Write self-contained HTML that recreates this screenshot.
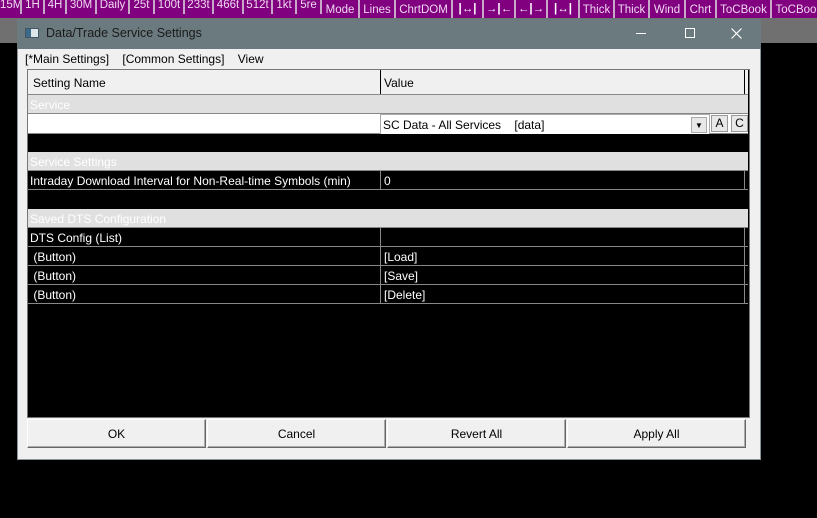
<!DOCTYPE html>
<html><head><style>
*{margin:0;padding:0;box-sizing:border-box}
body{width:817px;height:518px;background:#000;position:relative;overflow:hidden;font-family:"Liberation Sans",sans-serif;font-size:12px}
.a{position:absolute}
.tb{position:absolute;top:0;height:18px;background:#800080;color:#f0d8f0;font-size:11.5px;line-height:18px;text-align:center;border-right:2px solid #c8a8c8;white-space:nowrap;overflow:hidden}
.t2{line-height:20px;padding-top:0}
.row{position:absolute;left:28px;width:720px;height:19px;line-height:20px;border-bottom:1px solid #888;color:#fff;font-size:12px}
.sec{background:#e0e0e0;color:#fff}
.blk{background:#000}
.c1{position:absolute;left:2px}
.c2{position:absolute;left:352px;top:0;height:18px;border-left:1px solid #888;padding-left:3px}
.c3{position:absolute;left:716px;top:0;height:18px;border-left:1px solid #888}
.btn{position:absolute;top:419px;height:29px;width:179px;background:#f0f0f0;border:1px solid;border-color:#fff #666 #666 #fff;box-shadow:inset -1px -1px 0 #aaa;text-align:center;line-height:28px;font-size:12px;color:#000}
</style></head><body>
<div class="tb" style="left:0;width:22px;top:-4px">15M</div>
<div class="tb" style="left:22px;width:23px;top:-4px">1H</div>
<div class="tb" style="left:45px;width:22px;top:-4px">4H</div>
<div class="tb" style="left:67px;width:30px;top:-4px">30M</div>
<div class="tb" style="left:97px;width:33px;top:-4px">Daily</div>
<div class="tb" style="left:130px;width:25px;top:-4px">25t</div>
<div class="tb" style="left:155px;width:30px;top:-4px">100t</div>
<div class="tb" style="left:185px;width:29px;top:-4px">233t</div>
<div class="tb" style="left:214px;width:30px;top:-4px">466t</div>
<div class="tb" style="left:244px;width:29px;top:-4px">512t</div>
<div class="tb" style="left:273px;width:24px;top:-4px">1kt</div>
<div class="tb" style="left:297px;width:25px;top:-4px">5re</div>
<div class="tb t2" style="left:0;width:322px;top:14px;height:4px;border:none"></div>
<div class="tb t2" style="left:322px;width:38px">Mode</div>
<div class="tb t2" style="left:360px;width:36px">Lines</div>
<div class="tb t2" style="left:396px;width:57px">ChrtDOM</div>
<div class="tb" style="left:453px;width:31px;font-weight:bold;color:#fff">|↔|</div>
<div class="tb" style="left:484px;width:32px;font-weight:bold;color:#fff">→|←</div>
<div class="tb" style="left:516px;width:32px;font-weight:bold;color:#fff">←|→</div>
<div class="tb" style="left:548px;width:32px;font-weight:bold;color:#fff">|↔|</div>
<div class="tb t2" style="left:580px;width:35px">Thick</div>
<div class="tb t2" style="left:615px;width:35px">Thick</div>
<div class="tb t2" style="left:650px;width:36px">Wind</div>
<div class="tb t2" style="left:686px;width:31px">Chrt</div>
<div class="tb t2" style="left:717px;width:55px">ToCBook</div>
<div class="tb t2" style="left:772px;width:50px">ToCBoo</div>
<div class="a" style="left:0;top:18px;width:817px;height:25px;background:#707070"></div>

<div class="a" style="left:17px;top:19px;width:744px;height:441px;background:#f0f0f0;border:1px solid #8a9498"></div>
<div class="a" style="left:17px;top:19px;width:744px;height:30px;background:#6b7a7f"></div>
<div class="a" style="left:25px;top:28px;width:14px;height:10px;background:#dfe6ea;border:1px solid #456"></div>
<div class="a" style="left:26px;top:29px;width:5px;height:8px;background:#3a6a8a"></div>
<div class="a" style="left:46px;top:26px;color:#1a1a1a;font-size:12.5px">Data/Trade Service Settings</div>
<div class="a" style="left:636px;top:33px;width:10px;height:1px;background:#fff"></div>
<div class="a" style="left:685px;top:28px;width:10px;height:10px;border:1px solid #fff"></div>
<svg class="a" style="left:731px;top:28px" width="11" height="11"><path d="M0.5 0.5L10.5 10.5M10.5 0.5L0.5 10.5" stroke="#fff" stroke-width="1.2"/></svg>
<div class="a" style="left:25px;top:52px;color:#000">[*Main Settings]&nbsp;&nbsp;&nbsp;&nbsp;[Common Settings]&nbsp;&nbsp;&nbsp;&nbsp;View</div>

<div class="a" style="left:27px;top:69px;width:723px;height:349px;background:#000;border:1px solid #777"></div>
<div class="a" style="left:28px;top:70px;width:720px;height:25px;background:#f0f0f0;border-bottom:1px solid #888;color:#000;line-height:26px">
<span class="a" style="left:5px">Setting Name</span>
<span class="a" style="left:352px;top:0;height:24px;border-left:1px solid #000;padding-left:3px">Value</span>
<span class="a" style="left:716px;top:0;height:24px;border-left:1px solid #000"></span></div>
<div class="row sec" style="top:95px"><span class="c1">Service</span></div>
<div class="row" style="top:114px;background:#fff;height:20px"></div>
<div class="a" style="left:380px;top:114px;width:330px;height:21px;background:#fff;border:1px solid #aaa;color:#000;line-height:21px;padding-left:2px">SC Data - All Services&nbsp;&nbsp;&nbsp; [data]</div>
<div class="a" style="left:691px;top:117px;width:16px;height:16px;background:#e8e8e8;border:1px solid #aaa;font-size:8px;text-align:center;line-height:15px;color:#000">▼</div>
<div class="a" style="left:711px;top:115px;width:17px;height:17px;background:#e8e8e8;border:1px solid #999;color:#000;text-align:center;line-height:15px">A</div>
<div class="a" style="left:731px;top:115px;width:17px;height:17px;background:#e8e8e8;border:1px solid #999;color:#000;text-align:center;line-height:15px">C</div>
<div class="row blk" style="top:134px;border-bottom:none"></div>
<div class="row sec" style="top:152px"><span class="c1">Service Settings</span></div>
<div class="row blk" style="top:171px"><span class="c1">Intraday Download Interval for Non-Real-time Symbols (min)</span><span class="c2">0</span><span class="c3"></span></div>
<div class="row blk" style="top:190px;border-bottom:none"></div>
<div class="row sec" style="top:209px"><span class="c1">Saved DTS Configuration</span></div>
<div class="row blk" style="top:228px"><span class="c1">DTS Config (List)</span><span class="c2"></span><span class="c3"></span></div>
<div class="row blk" style="top:247px"><span class="c1">&nbsp;(Button)</span><span class="c2">[Load]</span><span class="c3"></span></div>
<div class="row blk" style="top:266px"><span class="c1">&nbsp;(Button)</span><span class="c2">[Save]</span><span class="c3"></span></div>
<div class="row blk" style="top:285px"><span class="c1">&nbsp;(Button)</span><span class="c2">[Delete]</span><span class="c3"></span></div>

<div class="btn" style="left:27px">OK</div>
<div class="btn" style="left:207px">Cancel</div>
<div class="btn" style="left:387px">Revert All</div>
<div class="btn" style="left:567px">Apply All</div>
</body></html>
